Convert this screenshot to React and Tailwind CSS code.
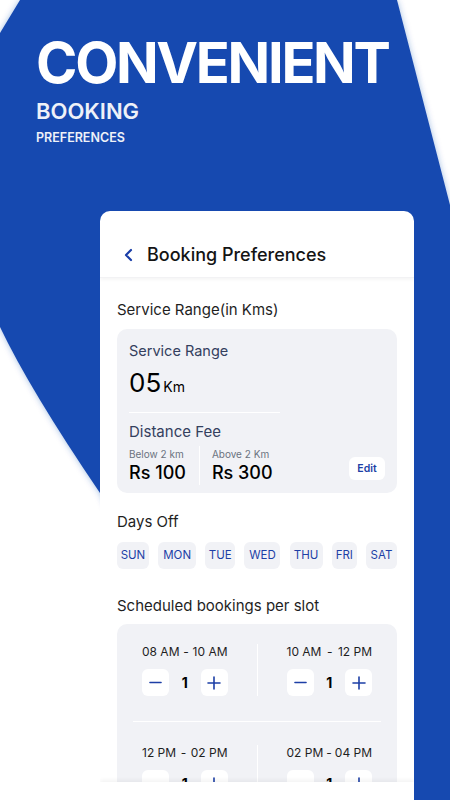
import React from 'react';

const days = [
  { label: 'SUN', w: 'w-[32px]' },
  { label: 'MON', w: 'w-[38px]' },
  { label: 'TUE', w: 'w-[30px]' },
  { label: 'WED', w: 'w-[36px]' },
  { label: 'THU', w: 'w-[33px]' },
  { label: 'FRI', w: 'w-[25px]' },
  { label: 'SAT', w: 'w-[31px]' },
];

const Stepper = ({ from, to, value }) => (
  <div className="flex flex-col w-[87px]">
    <div className="h-[16px] flex items-center justify-between text-[12px] text-[#1f1f1f] whitespace-nowrap">
      <span>{from}</span>
      <span>-</span>
      <span>{to}</span>
    </div>
    <div className="mt-[9px] flex items-center justify-between">
      <button className="w-[27px] h-[27px] rounded-[6px] bg-white flex items-center justify-center">
        <svg width="13" height="13" viewBox="0 0 14 14"><path d="M1 7h12" stroke="#1d3fa6" strokeWidth="1.6" strokeLinecap="round" /></svg>
      </button>
      <span className="text-[14px] font-bold text-black">{value}</span>
      <button className="w-[27px] h-[27px] rounded-[6px] bg-white flex items-center justify-center">
        <svg width="14" height="14" viewBox="0 0 14 14"><path d="M1 7h12M7 1v12" stroke="#1d3fa6" strokeWidth="1.6" strokeLinecap="round" /></svg>
      </button>
    </div>
  </div>
);

const SlotRow = ({ left, right }) => (
  <div className="flex px-[25px] gap-[29px]">
    <Stepper {...left} />
    <div className="w-px bg-white" />
    <Stepper {...right} />
  </div>
);

export default function App() {
  return (
    <div className="relative w-[450px] h-[800px] overflow-hidden bg-white" style={{ fontFamily: 'Inter, "Noto Sans", sans-serif' }}>
      <svg className="absolute inset-0" width="450" height="800" viewBox="0 0 450 800">
        <defs>
          <filter id="glow" x="-10%" y="-10%" width="120%" height="120%">
            <feDropShadow dx="0" dy="0" stdDeviation="3" floodColor="#1849b0" floodOpacity="0.35" />
          </filter>
        </defs>
        <path
          d="M20 0 L397 0 L450 205 L450 800 L200 800 L200 650 Q140 590 100 493 Q30 390 0 327 L0 33 Z"
          fill="#184ab0"
          filter="url(#glow)"
        />
      </svg>

      <div className="relative">
        <div className="pl-[36px] pt-[33px]">
          <h1 className="text-[56px] leading-[60px] font-bold text-white tracking-[-2.3px]">CONVENIENT</h1>
          <div className="mt-[5px] text-[22px] leading-[26px] font-semibold text-[#eef1f8]">BOOKING</div>
          <div className="mt-[6px] text-[12.5px] leading-[16px] font-semibold text-[#eef1f8]">PREFERENCES</div>
        </div>

        <div className="absolute left-[100px] top-[211px] w-[314px] h-[600px] bg-white rounded-t-[10px] overflow-hidden">
          <div className="h-[67px] flex items-start pt-[32px] pl-[23px] shadow-[0_2px_3px_rgba(0,0,0,0.04)] border-b border-[#f2f2f4]">
            <div className="h-[24px] flex items-center">
              <svg width="12" height="14" viewBox="0 0 12 14"><path d="M8 2 L3 7 L8 12" fill="none" stroke="#1a3ea8" strokeWidth="2.2" strokeLinecap="round" strokeLinejoin="round" /></svg>
              <span className="ml-[12px] text-[18px] leading-[24px] font-medium text-[#141414]">Booking Preferences</span>
            </div>
          </div>

          <div className="px-[17px]">
            <div className="mt-[21px] h-[22px] flex items-center text-[15px] text-[#1f1f1f]">Service Range(in Kms)</div>

            <div className="mt-[8px] rounded-[10px] bg-[#f1f2f6] px-[12px] pt-[12px] pb-[8px]">
              <div className="h-[20px] flex items-center text-[14.5px] text-[#34405e]">Service Range</div>
              <div className="mt-[6px] h-[32px] flex items-baseline text-black">
                <span className="text-[26px] leading-[32px]">05</span>
                <span className="ml-[2px] text-[14px]">Km</span>
              </div>
              <div className="mt-[13px] w-[151px] h-px bg-white" />
              <div className="mt-[9px] h-[20px] flex items-center text-[15px] text-[#34405e]">Distance Fee</div>
              <div className="mt-[4px] flex items-end">
                <div className="flex flex-col">
                  <span className="h-[14px] text-[10px] leading-[14px] text-[#6b7280]">Below 2 km</span>
                  <span className="h-[24px] text-[18px] leading-[24px] font-medium text-black">Rs 100</span>
                </div>
                <div className="ml-[13px] w-px h-[39px] bg-white" />
                <div className="ml-[12px] flex flex-col">
                  <span className="h-[14px] text-[10px] leading-[14px] text-[#6b7280]">Above 2 Km</span>
                  <span className="h-[24px] text-[18px] leading-[24px] font-medium text-black">Rs 300</span>
                </div>
                <button className="ml-auto mb-[5px] w-[36px] h-[23px] rounded-[6px] bg-white text-[10.5px] font-semibold text-[#1d3fa6]">Edit</button>
              </div>
            </div>

            <div className="mt-[18px] h-[22px] flex items-center text-[15px] text-[#1f1f1f]">Days Off</div>
            <div className="mt-[9px] flex justify-between">
              {days.map((d) => (
                <div key={d.label} className={`${d.w} h-[27px] rounded-[6px] bg-[#f1f2f6] flex items-center justify-center text-[11.5px] text-[#1d3fa6]`}>
                  {d.label}
                </div>
              ))}
            </div>

            <div className="mt-[26px] h-[22px] flex items-center text-[15px] text-[#1f1f1f]">Scheduled bookings per slot</div>

            <div className="mt-[7px] rounded-[10px] bg-[#f1f2f6] pt-[20px] pb-[20px]">
              <SlotRow left={{ from: '08 AM', to: '10 AM', value: 1 }} right={{ from: '10 AM', to: '12 PM', value: 1 }} />
              <div className="mx-[16px] mt-[25px] mb-[23px] h-px bg-white" />
              <SlotRow left={{ from: '12 PM', to: '02 PM', value: 1 }} right={{ from: '02 PM', to: '04 PM', value: 1 }} />
            </div>
          </div>

          <div className="absolute left-0 right-0 top-[571px] h-[40px] bg-white shadow-[0_-2px_4px_rgba(0,0,0,0.05)]" />
        </div>
      </div>
    </div>
  );
}
